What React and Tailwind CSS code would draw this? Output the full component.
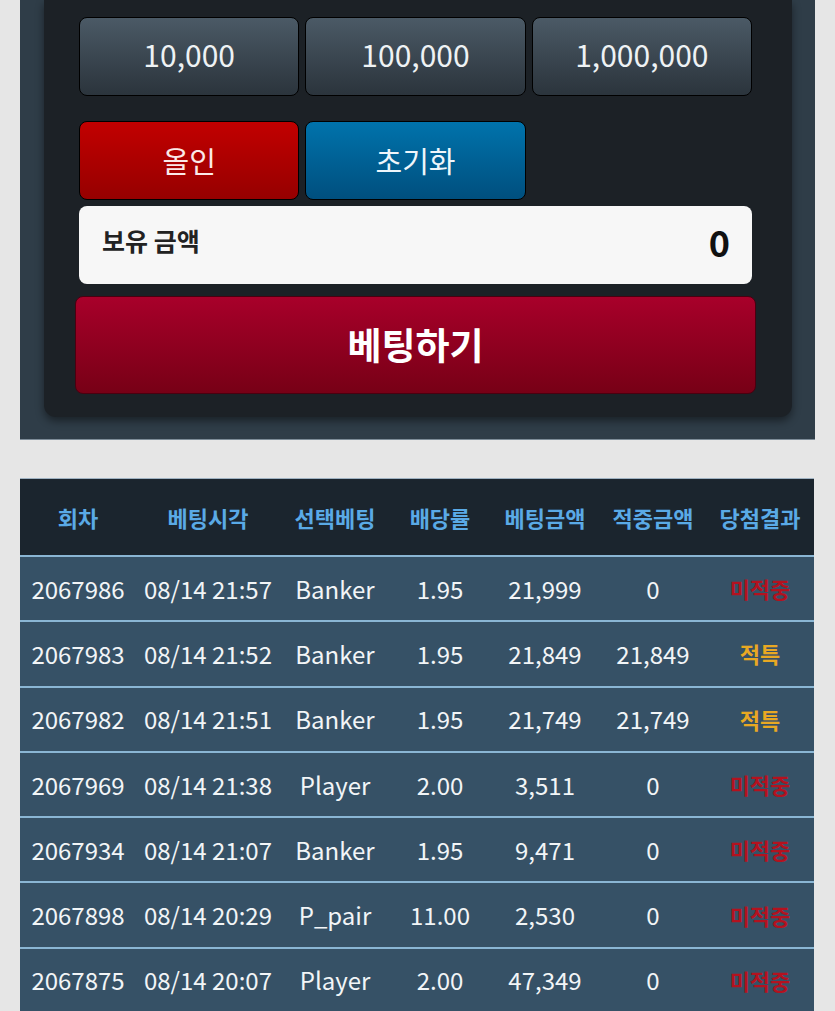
import React from "react";

const chips = ["10,000", "100,000", "1,000,000"];

const rows = [
  ["2067986", "08/14 21:57", "Banker", "1.95", "21,999", "0", "미적중"],
  ["2067983", "08/14 21:52", "Banker", "1.95", "21,849", "21,849", "적특"],
  ["2067982", "08/14 21:51", "Banker", "1.95", "21,749", "21,749", "적특"],
  ["2067969", "08/14 21:38", "Player", "2.00", "3,511", "0", "미적중"],
  ["2067934", "08/14 21:07", "Banker", "1.95", "9,471", "0", "미적중"],
  ["2067898", "08/14 20:29", "P_pair", "11.00", "2,530", "0", "미적중"],
  ["2067875", "08/14 20:07", "Player", "2.00", "47,349", "0", "미적중"],
];

const heads = ["회차", "베팅시각", "선택베팅", "배당률", "베팅금액", "적중금액", "당첨결과"];

const cols = "grid grid-cols-[116px_144px_110px_100px_110px_106px_108px]";

export default function App() {
  return (
    <div
      className="min-h-[1011px] bg-[#e6e6e6] px-5"
      style={{ fontFamily: '"Noto Sans CJK KR", "Noto Sans", sans-serif' }}
    >
      {/* Bet panel */}
      <div className="bg-[#2f3d48] px-6 pb-[22px] border-b border-[#7d8c98]">
        <div className="bg-[#1c2126] rounded-b-xl shadow-[0_4px_8px_rgba(0,0,0,0.45)] px-[35px] pt-[17px] pb-[23px] w-[748px]">
          <div className="w-[673px]">
            <div className="grid grid-cols-3 gap-[6px]">
              {chips.map((c) => (
                <button
                  key={c}
                  className="h-[79px] rounded-lg border border-black bg-gradient-to-b from-[#4b5a66] to-[#2b343c] text-[#eef2f4] text-[30px] pb-1"
                >
                  {c}
                </button>
              ))}
            </div>

            <div className="grid grid-cols-3 gap-[6px] mt-[25px]">
              <button className="h-[79px] rounded-lg border border-black bg-gradient-to-b from-[#c20000] to-[#960000] text-[#fbe9e9] text-[29px]">
                올인
              </button>
              <button className="h-[79px] rounded-lg border border-black bg-gradient-to-b from-[#0073ac] to-[#004f7e] text-[#eef6fb] text-[29px]">
                초기화
              </button>
            </div>

            <div className="mt-[6px] h-[78px] rounded-lg bg-[#f7f7f7] flex items-center justify-between pl-[23px] pr-[22px] pb-2">
              <span className="text-[25px] font-bold text-[#222]">보유 금액</span>
              <span className="text-[36px] font-bold text-[#111]">0</span>
            </div>

            <button className="mt-3 -mx-1 w-[681px] h-[98px] rounded-lg border border-[#4a0010] bg-gradient-to-b from-[#a8002a] to-[#770016] text-white text-[37px] font-bold">
              베팅하기
            </button>
          </div>
        </div>
      </div>

      {/* History table */}
      <div className="mt-[38px] w-[794px]">
        <div className={`${cols} h-[79px] items-center bg-[#1b252e] border-t border-[#9fb2c2] border-b-2 border-b-[#8ab6d4] text-[#5aaae6] text-[22px] font-bold text-center`}>
          {heads.map((h) => (
            <div key={h}>{h}</div>
          ))}
        </div>
        {rows.map((r) => (
          <div
            key={r[0]}
            className={`${cols} h-[65.3px] items-center bg-[#365166] border-b-2 border-[#8ab6d4] text-[#f2f5f7] text-[24px] text-center`}
          >
            {r.map((v, i) => (
              <div
                key={i}
                className={
                  i === 6
                    ? v === "적특"
                      ? "text-[#e8a823] font-bold text-[22px]"
                      : "text-[#b3121f] font-bold text-[22px]"
                    : ""
                }
              >
                {v}
              </div>
            ))}
          </div>
        ))}
      </div>
    </div>
  );
}
